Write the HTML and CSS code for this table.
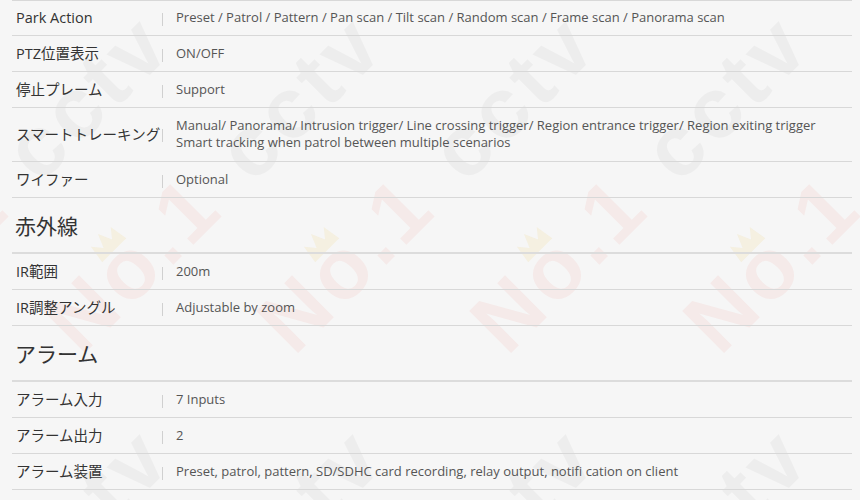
FILE: index.html
```html
<!DOCTYPE html>
<html lang="ja">
<head>
    <meta charset="UTF-8">
    <meta name="viewport" content="width=device-width, initial-scale=1.0">
    <title>仕様</title>
    <link rel="stylesheet" href="styles.css">
</head>
<body>
    <!-- 透かし -->
    <svg class="watermark" width="860" height="500" viewBox="0 0 860 500" aria-hidden="true">
        <defs>
            <g id="wm">
                <text class="wm-no" x="0" y="0">No.1</text>
                <text class="wm-cctv" x="243" y="0">cctv</text>
                <path class="wm-crown" d="M82 -52 L85 -71 L93 -61 L99 -75 L105 -61 L113 -71 L116 -52 Z"/>
            </g>
        </defs>
        <use href="#wm" transform="translate(-132 357) rotate(-45)"/>
        <use href="#wm" transform="translate(81 357) rotate(-45)"/>
        <use href="#wm" transform="translate(294 357) rotate(-45)"/>
        <use href="#wm" transform="translate(507 357) rotate(-45)"/>
        <use href="#wm" transform="translate(720 357) rotate(-45)"/>
        <use href="#wm" transform="translate(933 357) rotate(-45)"/>
        <use href="#wm" transform="translate(-132 770) rotate(-45)"/>
        <use href="#wm" transform="translate(81 770) rotate(-45)"/>
        <use href="#wm" transform="translate(294 770) rotate(-45)"/>
        <use href="#wm" transform="translate(507 770) rotate(-45)"/>
        <use href="#wm" transform="translate(720 770) rotate(-45)"/>
    </svg>

    <div class="spec">
        <div class="spec-list">
            <div class="spec-row">
                <div class="spec-label">Park Action</div>
                <span class="spec-sep"></span>
                <div class="spec-value">Preset / Patrol / Pattern / Pan scan / Tilt scan / Random scan / Frame scan / Panorama scan</div>
            </div>
            <div class="spec-row">
                <div class="spec-label">PTZ位置表示</div>
                <span class="spec-sep"></span>
                <div class="spec-value">ON/OFF</div>
            </div>
            <div class="spec-row">
                <div class="spec-label">停止プレーム</div>
                <span class="spec-sep"></span>
                <div class="spec-value">Support</div>
            </div>
            <div class="spec-row spec-row-tall">
                <div class="spec-label">スマートトレーキング</div>
                <span class="spec-sep"></span>
                <div class="spec-value">Manual/ Panorama/ Intrusion trigger/ Line crossing trigger/ Region entrance trigger/ Region exiting trigger<br>Smart tracking when patrol between multiple scenarios</div>
            </div>
            <div class="spec-row">
                <div class="spec-label">ワイファー</div>
                <span class="spec-sep"></span>
                <div class="spec-value">Optional</div>
            </div>
        </div>

        <h3 class="spec-title">赤外線</h3>
        <div class="spec-list">
            <div class="spec-row">
                <div class="spec-label">IR範囲</div>
                <span class="spec-sep"></span>
                <div class="spec-value">200m</div>
            </div>
            <div class="spec-row">
                <div class="spec-label">IR調整アングル</div>
                <span class="spec-sep"></span>
                <div class="spec-value">Adjustable by zoom</div>
            </div>
        </div>

        <h3 class="spec-title">アラーム</h3>
        <div class="spec-list">
            <div class="spec-row">
                <div class="spec-label">アラーム入力</div>
                <span class="spec-sep"></span>
                <div class="spec-value">7 Inputs</div>
            </div>
            <div class="spec-row">
                <div class="spec-label">アラーム出力</div>
                <span class="spec-sep"></span>
                <div class="spec-value">2</div>
            </div>
            <div class="spec-row">
                <div class="spec-label">アラーム装置</div>
                <span class="spec-sep"></span>
                <div class="spec-value">Preset, patrol, pattern, SD/SDHC card recording, relay output, notifi cation on client</div>
            </div>
        </div>
    </div>
</body>
</html>
```

FILE: styles.css
```css
* {
    margin: 0;
    padding: 0;
    box-sizing: border-box;
    font-family: 'Open Sans', 'Noto Sans CJK JP', sans-serif;
}

body {
    background-color: #f6f6f6;
    color: #333;
    overflow: hidden;
}

/* 透かし */
.watermark {
    position: absolute;
    top: 0;
    left: 0;
    z-index: 0;
}

.wm-no,
.wm-cctv {
    font-family: 'Liberation Sans', sans-serif;
    font-size: 86px;
    font-weight: bold;
    letter-spacing: 5px;
}

.wm-no {
    fill: #e8332a;
    fill-opacity: 0.06;
}

.wm-cctv {
    fill: #000;
    fill-opacity: 0.035;
}

.wm-crown {
    fill: #e8b82a;
    fill-opacity: 0.1;
}

.spec {
    position: relative;
    z-index: 1;
    margin: 0 8px 0 12px;
}

.spec-list:first-child {
    border-top: 1px solid #d8d8d8;
}

.spec-list:first-child .spec-row:first-child {
    padding-top: 8px;
}

.spec-row {
    display: flex;
    align-items: center;
    padding: 9px 0 9px 4px;
    border-bottom: 1px solid #d8d8d8;
}

.spec-row-tall {
    padding-bottom: 10px;
}

.spec-label {
    width: 146px;
    flex-shrink: 0;
    font-size: 14.5px;
    line-height: 17px;
    color: #333;
    white-space: nowrap;
}

.spec-sep {
    display: block;
    width: 1px;
    height: 13px;
    margin-top: 3px;
    background-color: #d0d0d0;
    flex-shrink: 0;
}

.spec-value {
    margin-left: 13px;
    font-size: 13px;
    line-height: 17px;
    color: #555;
}

.spec-title {
    display: flex;
    align-items: center;
    height: 56px;
    padding-left: 3px;
    font-size: 21px;
    font-weight: normal;
    color: #333;
    border-bottom: 2px solid #dcdcdc;
}
```
